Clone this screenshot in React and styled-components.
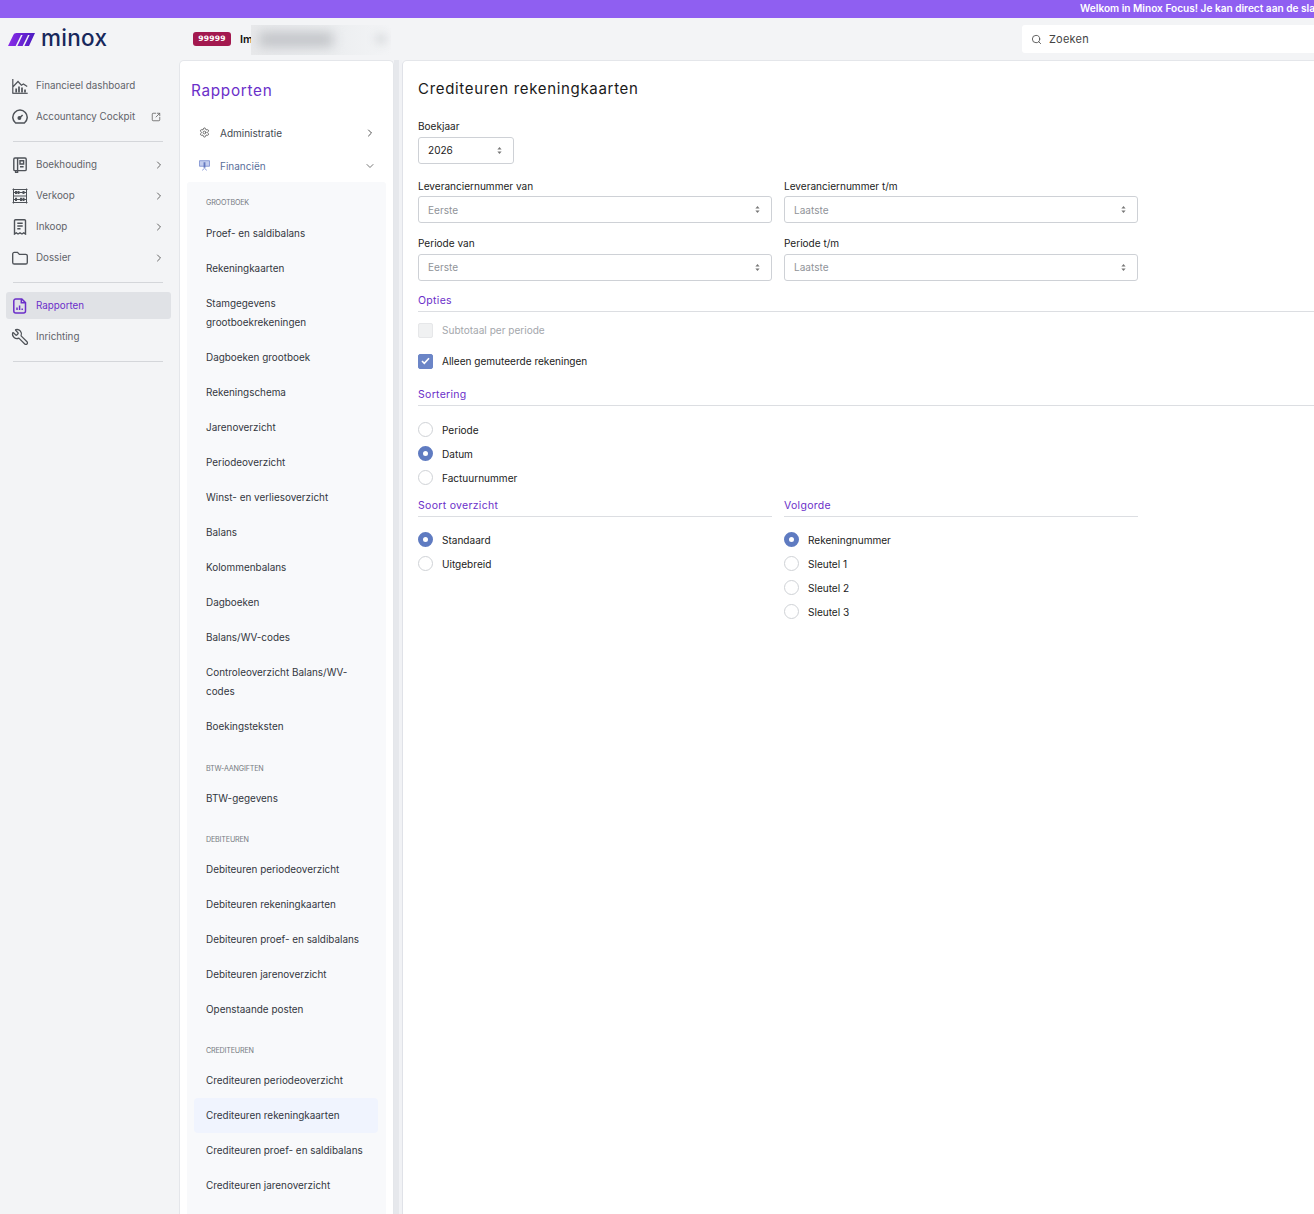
import React from 'react';
import styled, { createGlobalStyle } from 'styled-components';
import { ChevronRight, ChevronDown, Wrench, Settings, Search, SquareArrowOutUpRight } from 'lucide-react';

const Global = createGlobalStyle`
  html, body { margin: 0; padding: 0; background: #f3f4f6; }
  * { box-sizing: border-box; }
  body { font-family: "Inter", "Noto Sans", sans-serif; }
`;
const Page = styled.div`
  width: 1314px; height: 1214px; overflow: hidden; display: flex; flex-direction: column; background: #f3f4f6;
`;
const Banner = styled.div`
  height: 18px; flex: none; background: #8f5ff1; color: #fff; font: 600 10.1px/17px "Inter", sans-serif;
  padding-left: 1080px; white-space: nowrap; overflow: hidden;
`;
const Header = styled.div`
  height: 42px; flex: none; display: flex; align-items: center; position: relative;
`;
const LogoArea = styled.div`
  width: 193px; flex: none; display: flex; align-items: center; padding-left: 8px; gap: 6px; height: 100%;
`;
const LogoText = styled.span`
  font: 500 22.5px/30px "Inter", sans-serif; color: #17285c; letter-spacing: 0.3px; margin-top: -2px;
`;
const Badge = styled.span`
  width: 38px; height: 14px; border-radius: 3px; background: #a3194f; color: #fff; font: 700 7.6px/14px "DejaVu Sans", sans-serif;
  text-align: center; letter-spacing: .2px;
`;
const OrgName = styled.span`
  margin-left: 9px; font: 600 11px/16px "Inter", sans-serif; color: #111;
`;
const Blur = styled.div`
  position: absolute; left: 251px; top: 7px; width: 140px; height: 30px; overflow: hidden;
  background: linear-gradient(to right, #e8e9eb 0, #eceef0 60%, #f3f4f6 100%);
  &::before { content: ""; position: absolute; left: 8px; top: 7px; width: 74px; height: 15px; background: #c2c4c8; filter: blur(6px); }
  &::after { content: ""; position: absolute; left: 124px; top: 9px; width: 12px; height: 10px; background: #dcdee1; filter: blur(4px); }
`;
const SearchBox = styled.div`
  position: absolute; left: 1022px; top: 7px; width: 320px; height: 28px; background: #fff; border-radius: 3px;
  display: flex; align-items: center; padding-left: 9px; gap: 7px; color: #444; font-size: 11px; letter-spacing: .2px;
`;
const Body = styled.div`
  flex: 1; display: flex; min-height: 0;
`;
const Side = styled.nav`
  width: 179px; flex: none; padding: 10px 8px 0 6px; display: flex; flex-direction: column;
`;
const NavItem = styled.div`
  height: ${p => (p.$active ? 27 : 31)}px; margin: ${p => (p.$active ? '2px 0' : 0)}; display: flex; align-items: center; padding: 0 6px 0 6px; gap: 8px;
  border-radius: 3px; font-size: 9.8px; background: ${p => (p.$active ? '#e0e2e6' : 'transparent')};
  color: ${p => (p.$active ? '#6b2fc9' : '#5f6369')};
  & > svg:first-child { width: 16px; height: 16px; flex: none; }
  & > span { flex: 1; white-space: nowrap; }
`;
const ExtIcon = styled(SquareArrowOutUpRight)`
  margin-right: 4px;
`;
const FlipWrench = styled(Wrench)`
  transform: scaleX(-1) scale(1.12);
`;
const Rule = styled.hr`
  border: 0; border-top: 1px solid #d4d6da; margin: 9px 8px 7px 7px; height: 0;
  width: 150px;
`;
const Panel = styled.aside`
  width: 215px; flex: none; background: #fff; border: 1px solid #e4e6ea; border-bottom: 0; border-radius: 5px 5px 0 0; padding: 20px 7px 0; overflow: hidden;
`;
const PanelTitle = styled.div`
  padding-left: 4px; font: 400 15.3px/20px "Inter", sans-serif; color: #6b2fc9; letter-spacing: .7px; margin-bottom: 15px;
`;
const Group = styled.div`
  height: 33px; display: flex; align-items: center; padding: 0 10px 0 12px; gap: 10px; font-size: 10px; color: ${p => p.$c || '#444a52'};
  & > span { flex: 1; }
`;
const SubPanel = styled.div`
  background: #f8f9fb; padding: 14px 8px 80px 7px; width: 199px; border-radius: 3px 3px 0 0;
`;
const SectionLabel = styled.div`
  font-size: 7.2px; line-height: 14px; color: #777b82; padding-left: 12px; text-transform: uppercase; margin: ${p => (p.$first ? '0 0 6px' : '17px 0 5px')}; letter-spacing: -0.2px;
`;
const Item = styled.div`
  padding: 8px 12px; font-size: 9.92px; line-height: 19.026px; color: #33373e; border-radius: 4px;
  background: ${p => (p.$active ? '#f0f4fe' : 'transparent')};
`;
const Gutter = styled.div`
  width: 8px; flex: none; background: linear-gradient(to right, #e6e8ec 5px, #f1f2f5 5px);
`;
const Main = styled.main`
  flex: 1; min-width: 0; background: #fff; border-left: 1px solid #e0e2e8; border-top: 1px solid #e4e6ea; border-top-left-radius: 5px; padding: 17px 0 0 15px; overflow: hidden;
`;
const Title = styled.h1`
  margin: 0 0 19px; font: 400 15px/21px "Inter", sans-serif; color: #1a1a1a; letter-spacing: .68px;
`;
const FieldGrid = styled.div`
  display: grid; grid-template-columns: 354px 354px; column-gap: 12px; row-gap: 12px;
`;
const Field = styled.div`
  display: flex; flex-direction: column;
`;
const YearField = styled(Field)`
  grid-column: 1 / 3; margin-bottom: 2.4px;
`;
const Label = styled.label`
  font-size: 10.05px; line-height: 16px; color: #222; margin-bottom: 2.5px;
`;
const Select = styled.div`
  height: 27px; width: ${p => p.$w || '100%'}; border: 1px solid #ced1d6; border-radius: 3px; background: #fff; display: flex; align-items: center; justify-content: space-between;
  padding: 0 11px 0 9px; font-size: 10.05px; color: ${p => (p.$ph ? '#8f9399' : '#222')};
`;
const SectionHead = styled.div`
  font: 400 10.5px/16px "Inter", sans-serif; color: #6b2fc9; border-bottom: 1px solid #dcdee2; padding-bottom: 2px; letter-spacing: .3px; margin-top: ${p => p.$mt || 0}px;
`;
const CheckRow = styled.div`
  height: 31px; display: flex; align-items: center; gap: 9px; font-size: 10.05px; color: ${p => (p.$off ? '#a4a7ac' : '#222')};
`;
const Box = styled.span`
  width: 15px; height: 15px; border-radius: 2px; display: flex; align-items: center; justify-content: center;
  background: ${p => (p.$on ? '#6b85c7' : '#f0f1f2')}; border: 1px solid ${p => (p.$on ? '#6b85c7' : '#e6e7e9')};
`;
const RadioRow = styled.div`
  height: 24px; display: flex; align-items: center; gap: 9px; font-size: 10.05px; color: #222;
`;
const RadioDot = styled.span`
  width: 15px; height: 15px; border-radius: 50%; flex: none; background: #fff;
  border: ${p => (p.$on ? '5px solid #5f7bc1' : '1px solid #cfd2d6')};
`;
const Options = styled.div`
  padding-top: 3px;
`;
const Radios = styled.div`
  padding-top: ${p => p.$pt || 12}px;
`;
const Columns = styled.div`
  display: grid; grid-template-columns: 354px 354px; column-gap: 12px; margin-top: 8px;
`;
const Spin = () => (
  <svg width="5" height="7" viewBox="0 0 5 7" fill="#777"><path d="M2.5 0 4.6 2.6H.4z" /><path d="M2.5 7 .4 4.4h4.2z" /></svg>
);

const ink = '#4e5258';
const IconDash = () => (
  <svg viewBox="0 0 16 16" fill="none" stroke={ink} strokeWidth="1.2"><path d="M.8 15V1M.8 9 6 3.5l3.4 3.7 2-1.2 3.8 2.6" /><path d="M.3 15.3h15.4" /><path d="M4.2 14.5v-4M7 14.5V8.5M10 14.5v-5M13 14.5v-3" strokeWidth="1.7" /></svg>
);
const IconGauge = () => (
  <svg viewBox="0 0 16 16" fill="none" stroke={ink} strokeWidth="1.5"><path d="M3.6 14a7.2 7.2 0 1 1 8.8 0z" /><path d="M7.4 9.2 10.6 6" /><circle cx="7.4" cy="9" r="1.2" fill={ink} /></svg>
);
const IconBook = () => (
  <svg viewBox="0 0 16 16" fill="none" stroke={ink} strokeWidth="1.4"><rect x="1.8" y="1" width="12.4" height="12.6" rx="1.2" /><path d="M5.6 1v12.6M8 3.8h3.6v3.2H8zM8 9.8h3.6M3.6 13.6v1.9h2v-1.9" /></svg>
);
const IconAbacus = () => (
  <svg viewBox="0 0 16 16" fill="none" stroke={ink} strokeWidth="1.3"><path d="M1.5 .5v15M14.5 .5v15M.5 1.5h15M1 8h14M.5 14.5h15M1 4.5h14M1 11.5h14" strokeWidth="1" /><path d="M4 3v3M6.5 3v3M11.5 3v3M4 9.7v3.2M9 9.7v3.2M11.5 9.7v3.2" strokeWidth="2" /></svg>
);
const IconReceipt = () => (
  <svg viewBox="0 0 16 16" fill="none" stroke={ink} strokeWidth="1.4"><path d="M2.5 15V1.8A1 1 0 0 1 3.5.8h9a1 1 0 0 1 1 1V15l-1.8-1.2L10 15l-2-1.2L6 15l-1.7-1.2z" /><path d="M5.3 4.3h5.4M5.3 7h5.4M5.3 9.7h3.2" /></svg>
);
const IconFolder = () => (
  <svg viewBox="0 0 16 16" fill="none" stroke={ink} strokeWidth="1.35"><path d="M.7 4a1.6 1.6 0 0 1 1.6-1.6h3.2l1.9 2h6.3A1.6 1.6 0 0 1 15.3 6v6.4a1.6 1.6 0 0 1-1.6 1.6H2.3a1.6 1.6 0 0 1-1.6-1.6z" /></svg>
);
const IconReport = () => (
  <svg viewBox="0 0 16 16" fill="none" stroke="#6b2fc9" strokeWidth="1.5"><path d="M3.8.9h6l3.7 3.7V13a2 2 0 0 1-2 2H3.8a2 2 0 0 1-2-2V2.9a2 2 0 0 1 2-2z" /><path d="M9.3.9v3.8h4.2M5 12V9.5M7.6 12V7.5M10.2 12v-1.5" /></svg>
);
const IconBoard = () => (
  <svg viewBox="0 0 12 12" width="11" height="11" fill="none" stroke="#8294d2" strokeWidth="1"><path d="M.5.8h11v6h-11z" fill="#c3cdee" /><path d="M6 2.5v6" stroke="#6478bf" strokeWidth="2" /><path d="M3.5 11.3 6 9l2.5 2.3" /></svg>
);
const Mark = () => (
  <svg width="27" height="13" viewBox="0 0 27 13"><defs><linearGradient id="mg" x1="0" x2="1"><stop offset="0" stopColor="#8a2be8" /><stop offset="1" stopColor="#4a1cc0" /></linearGradient></defs><path fill="url(#mg)" d="M0 13 5.2 2.2C5.9.7 6.9 0 8.4 0H27l-6 13h-4.6L21.6 2H20L14.6 13h-5.2L14.6 2H13L7.6 13z" /></svg>
);

const sections = [
  { label: 'Grootboek', items: ['Proef- en saldibalans', 'Rekeningkaarten', 'Stamgegevens grootboekrekeningen', 'Dagboeken grootboek', 'Rekeningschema', 'Jarenoverzicht', 'Periodeoverzicht', 'Winst- en verliesoverzicht', 'Balans', 'Kolommenbalans', 'Dagboeken', 'Balans/WV-codes', 'Controleoverzicht Balans/WV-codes', 'Boekingsteksten'] },
  { label: 'BTW-aangiften', items: ['BTW-gegevens'] },
  { label: 'Debiteuren', items: ['Debiteuren periodeoverzicht', 'Debiteuren rekeningkaarten', 'Debiteuren proef- en saldibalans', 'Debiteuren jarenoverzicht', 'Openstaande posten'] },
  { label: 'Crediteuren', items: ['Crediteuren periodeoverzicht', 'Crediteuren rekeningkaarten', 'Crediteuren proef- en saldibalans', 'Crediteuren jarenoverzicht'] },
];
const chev = <ChevronRight size={12} color="#666" />;

export default function App() {
  return (
    <Page>
      <Global />
      <Banner>Welkom in Minox Focus! Je kan direct aan de slag</Banner>
      <Header>
        <LogoArea><Mark /><LogoText>minox</LogoText></LogoArea>
        <Badge>99999</Badge>
        <OrgName>Im</OrgName>
        <Blur />
        <SearchBox><Search size={11} color="#555" />Zoeken</SearchBox>
      </Header>
      <Body>
        <Side>
          <NavItem><IconDash /><span>Financieel dashboard</span></NavItem>
          <NavItem><IconGauge /><span>Accountancy Cockpit</span><ExtIcon size={10} color="#666" /></NavItem>
          <Rule />
          <NavItem><IconBook /><span>Boekhouding</span>{chev}</NavItem>
          <NavItem><IconAbacus /><span>Verkoop</span>{chev}</NavItem>
          <NavItem><IconReceipt /><span>Inkoop</span>{chev}</NavItem>
          <NavItem><IconFolder /><span>Dossier</span>{chev}</NavItem>
          <Rule />
          <NavItem $active><IconReport /><span>Rapporten</span></NavItem>
          <NavItem><FlipWrench strokeWidth={1.7} color={ink} /><span>Inrichting</span></NavItem>
          <Rule />
        </Side>
        <Panel>
          <PanelTitle>Rapporten</PanelTitle>
          <Group><Settings size={11} color="#666" /><span>Administratie</span><ChevronRight size={12} color="#555" /></Group>
          <Group $c="#5a6f9a"><IconBoard /><span>Financiën</span><ChevronDown size={12} color="#777" /></Group>
          <SubPanel>
            {sections.map((s, i) => (
              <div key={s.label}>
                <SectionLabel $first={i === 0}>{s.label}</SectionLabel>
                {s.items.map(t => <Item key={t} $active={t === 'Crediteuren rekeningkaarten'}>{t}</Item>)}
              </div>
            ))}
          </SubPanel>
        </Panel>
        <Gutter />
        <Main>
          <Title>Crediteuren rekeningkaarten</Title>
          <FieldGrid>
            <YearField><Label>Boekjaar</Label><Select $w="96px">2026<Spin /></Select></YearField>
            <Field><Label>Leveranciernummer van</Label><Select $ph>Eerste<Spin /></Select></Field>
            <Field><Label>Leveranciernummer t/m</Label><Select $ph>Laatste<Spin /></Select></Field>
            <Field><Label>Periode van</Label><Select $ph>Eerste<Spin /></Select></Field>
            <Field><Label>Periode t/m</Label><Select $ph>Laatste<Spin /></Select></Field>
          </FieldGrid>
          <SectionHead $mt={12}>Opties</SectionHead>
          <Options>
            <CheckRow $off><Box />Subtotaal per periode</CheckRow>
            <CheckRow><Box $on><svg width="9" height="8" viewBox="0 0 9 8" fill="none" stroke="#fff" strokeWidth="1.6"><path d="M1 4l2.3 2.3L8 1.2" /></svg></Box>Alleen gemuteerde rekeningen</CheckRow>
          </Options>
          <SectionHead $mt={10}>Sortering</SectionHead>
          <Radios>
            <RadioRow><RadioDot />Periode</RadioRow>
            <RadioRow><RadioDot $on />Datum</RadioRow>
            <RadioRow><RadioDot />Factuurnummer</RadioRow>
          </Radios>
          <Columns>
            <div>
              <SectionHead>Soort overzicht</SectionHead>
              <Radios $pt={11}>
                <RadioRow><RadioDot $on />Standaard</RadioRow>
                <RadioRow><RadioDot />Uitgebreid</RadioRow>
              </Radios>
            </div>
            <div>
              <SectionHead>Volgorde</SectionHead>
              <Radios $pt={11}>
                <RadioRow><RadioDot $on />Rekeningnummer</RadioRow>
                <RadioRow><RadioDot />Sleutel 1</RadioRow>
                <RadioRow><RadioDot />Sleutel 2</RadioRow>
                <RadioRow><RadioDot />Sleutel 3</RadioRow>
              </Radios>
            </div>
          </Columns>
        </Main>
      </Body>
    </Page>
  );
}
